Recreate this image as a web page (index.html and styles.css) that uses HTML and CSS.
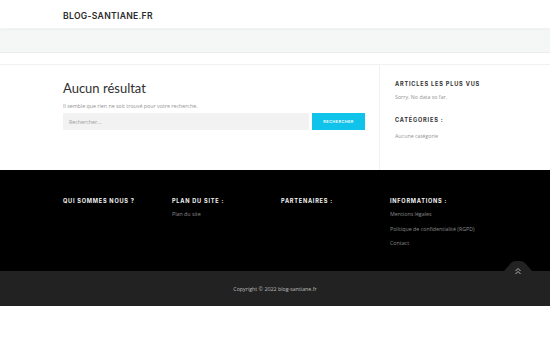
FILE: index.html
```html
<!DOCTYPE html>
<html lang="fr">
<head>
    <meta charset="UTF-8">
    <title>Vous avez cherché  - blog-santiane.fr</title>
    <link rel="stylesheet" href="styles.css">
</head>
<body>
<header class="site-header">
  <div class="container">
    <a class="logo" href="#">BLOG-SANTIANE.FR</a>
  </div>
</header>

<div class="page-band"></div>

<div class="content-wrap">
  <div class="container content-row">
    <main class="main-col">
      <h1 class="page-title">Aucun résultat</h1>
      <p class="intro">Il semble que rien ne soit trouvé pour votre recherche.</p>
      <form class="search-form">
        <input type="text" class="search-field" placeholder="Rechercher...">
        <button type="button" class="search-btn">RECHERCHER</button>
      </form>
    </main>
    <aside class="sidebar">
      <h4 class="widget-title">ARTICLES LES PLUS VUS</h4>
      <p class="widget-text">Sorry. No data so far.</p>
      <h4 class="widget-title second">CATÉGORIES :</h4>
      <p class="widget-text last">Aucune catégorie</p>
    </aside>
  </div>
</div>

<footer class="site-footer">
  <div class="container footer-cols">
    <div class="footer-col">
      <h5 class="footer-title">QUI SOMMES NOUS ?</h5>
    </div>
    <div class="footer-col">
      <h5 class="footer-title">PLAN DU SITE :</h5>
      <a class="footer-link" href="#">Plan du site</a>
    </div>
    <div class="footer-col">
      <h5 class="footer-title">PARTENAIRES :</h5>
    </div>
    <div class="footer-col">
      <h5 class="footer-title">INFORMATIONS :</h5>
      <a class="footer-link" href="#">Mentions légales</a>
      <a class="footer-link" href="#">Politique de confidentialité (RGPD)</a>
      <a class="footer-link" href="#">Contact</a>
    </div>
  </div>
</footer>

<div class="bottom-bar">
  <a class="scroll-top" href="#">
    <svg width="30" height="14" viewBox="0 0 30 14">
      <path d="M0 11 L8 2 Q10 0 13 0 L17 0 Q20 0 22 2 L30 11 L30 14 L0 14 Z" fill="#222"/>
      <path d="M12.5 10 L15 7.5 L17.5 10 M12.5 13 L15 10.5 L17.5 13" fill="none" stroke="#b5b5b5" stroke-width="1"/>
    </svg>
  </a>
  <p class="copyright">Copyright © 2022 blog-santiane.fr</p>
</div>
</body>
</html>
```
FILE: styles.css
```css
body{
  margin: 0;
  font-family: "Open Sans", sans-serif;
  color: #929292;
  background: #fff;
}

.container{
  width: 424px;
  margin: 0 auto;
}

a{
  text-decoration: none;
}

/* header */
.site-header{
  height: 28px;
  background: #fff;
  box-shadow: 0 1px 2px rgba(0, 0, 0, 0.08);
  position: relative;
}

.site-header .container{
  display: flex;
  align-items: center;
  height: 100%;
}

.logo{
  font-family: "Inter", sans-serif;
  font-weight: 600;
  font-size: 8.6px;
  letter-spacing: 0.3px;
  color: #2b2b2b;
  margin-top: 3px;
}

.page-band{
  margin-top: 1px;
  height: 23px;
  background: #f5f7f7;
  border-bottom: 1px solid #ebeded;
}

/* content */
.content-wrap{
  margin-top: 11px;
  border-top: 1px solid #f1f1f1;
}

.content-row{
  display: flex;
  height: 105px;
}

.main-col{
  width: 302px;
  padding-right: 14px;
  padding-top: 14px;
}

.page-title{
  font-family: "Lato", sans-serif;
  font-weight: 400;
  font-size: 13px;
  color: #2f2f2f;
  margin: 0;
  line-height: 18px;
}

.intro{
  font-size: 5.3px;
  margin: 5px 0 0;
  line-height: 8px;
}

.search-form{
  display: flex;
  margin-top: 3px;
  height: 17px;
}

.search-field{
  width: 246px;
  border: 0;
  background: #f2f2f2;
  padding: 0 6px;
  font-family: "Open Sans", sans-serif;
  font-size: 5.3px;
  color: #999;
  box-sizing: border-box;
}

.search-field::placeholder{
  color: #9a9a9a;
}

.search-btn{
  margin-left: 3px;
  width: 53px;
  border: 0;
  background: #0fc3ea;
  color: #fff;
  font-family: "Inter", sans-serif;
  font-weight: 600;
  font-size: 3.8px;
  letter-spacing: 0.5px;
  padding: 0;
}

.sidebar{
  flex: 1;
  border-left: 1px solid #f1f1f1;
  padding-left: 15px;
  padding-top: 15px;
}

.widget-title{
  font-family: "Inter", sans-serif;
  font-weight: 700;
  font-size: 5.6px;
  letter-spacing: 0.8px;
  color: #333;
  margin: 0;
  line-height: 8px;
}

.widget-title.second{
  margin-top: 15px;
}

.widget-text{
  font-size: 5.3px;
  margin: 5px 0 0;
  line-height: 8px;
}

.widget-text.last{
  margin-top: 8px;
}

/* footer */
.site-footer{
  background: #000;
  height: 101px;
}

.footer-cols{
  display: grid;
  grid-template-columns: repeat(4, 109px);
  padding-top: 27px;
}

.footer-col{
  display: flex;
  flex-direction: column;
}

.footer-title{
  font-family: "Inter", sans-serif;
  font-weight: 700;
  font-size: 5.6px;
  letter-spacing: 0.75px;
  color: #f2f2f2;
  margin: 0 0 5px;
  line-height: 8px;
}

.footer-link{
  font-size: 5.3px;
  color: #8a8a8a;
  line-height: 8px;
  margin-bottom: 6.5px;
}

.bottom-bar{
  background: #222;
  height: 35px;
  position: relative;
  display: flex;
  align-items: center;
  justify-content: center;
}

.copyright{
  margin: 0;
  font-size: 5.3px;
  color: #bdbdbd;
}

.scroll-top{
  position: absolute;
  left: 503px;
  top: -10px;
  width: 30px;
  height: 14px;
}

.scroll-top svg{
  display: block;
}
```
